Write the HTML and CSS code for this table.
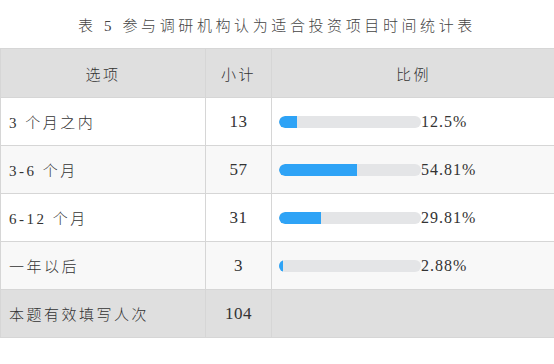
FILE: index.html
```html
<!DOCTYPE html>
<html lang="zh-CN">
<head>
<meta charset="utf-8">
<title>表5</title>
<link rel="stylesheet" href="styles.css">
</head>
<body>
<div class="page">
  <div class="title">表 5 参与调研机构认为适合投资项目时间统计表</div>
  <table class="stats">
    <colgroup>
      <col class="c-opt"><col class="c-cnt"><col class="c-pct">
    </colgroup>
    <thead>
      <tr class="head"><th>选项</th><th>小计</th><th>比例</th></tr>
    </thead>
    <tbody>
      <tr class="odd"><td class="opt">3 个月之内</td><td class="cnt">13</td><td class="pct"><div class="pctwrap"><div class="track"><div class="fill" style="width:12.5%"></div></div><span class="num">12.5%</span></div></td></tr>
      <tr class="even"><td class="opt">3-6 个月</td><td class="cnt">57</td><td class="pct"><div class="pctwrap"><div class="track"><div class="fill" style="width:54.81%"></div></div><span class="num">54.81%</span></div></td></tr>
      <tr class="odd"><td class="opt">6-12 个月</td><td class="cnt">31</td><td class="pct"><div class="pctwrap"><div class="track"><div class="fill" style="width:29.81%"></div></div><span class="num">29.81%</span></div></td></tr>
      <tr class="even"><td class="opt">一年以后</td><td class="cnt">3</td><td class="pct"><div class="pctwrap"><div class="track"><div class="fill" style="width:2.88%"></div></div><span class="num">2.88%</span></div></td></tr>
    </tbody>
    <tfoot>
      <tr class="foot"><td class="opt">本题有效填写人次</td><td class="cnt">104</td><td class="pct"></td></tr>
    </tfoot>
  </table>
</div>
</body>
</html>
```
FILE: styles.css
```css
html, body {
  margin: 0;
  padding: 0;
  background: #ffffff;
}
body {
  font-family: "Liberation Serif", "Noto Sans CJK SC", serif;
  color: #333333;
}
.page {
  width: 554px;
  overflow: hidden;
}
.title {
  height: 48px;
  box-sizing: border-box;
  padding-top: 4px;
  line-height: 44px;
  text-align: center;
  font-size: 15px;
  font-weight: 300;
  letter-spacing: 3.6px;
  color: #444444;
}
.stats {
  width: 555px;
  border-collapse: collapse;
  table-layout: fixed;
  font-size: 15px;
  font-weight: 300;
  letter-spacing: 2.5px;
}
.c-opt { width: 205px; }
.c-cnt { width: 66px; }
.c-pct { width: 284px; }
.stats th,
.stats td {
  border: 1px solid #d6d6d6;
  padding: 0;
  height: 47px;
  font-weight: 300;
}
.head th {
  background: #dfdfdf;
  text-align: center;
  height: 48px;
}
.odd td { background: #ffffff; }
.even td { background: #f8f8f8; }
.foot td { background: #dfdfdf; }
.opt {
  padding-left: 8px !important;
  text-align: left;
}
.cnt {
  text-align: center;
  font-size: 17px;
  letter-spacing: 0.5px;
}
.pct {
  padding-left: 7px !important;
}
.pctwrap {
  display: flex;
  align-items: center;
}
.track {
  width: 142px;
  height: 12px;
  border-radius: 6px;
  background: #e4e5e7;
  overflow: hidden;
  flex: none;
}
.fill {
  height: 100%;
  background: #2ea3f6;
  border-radius: 6px 0 0 6px;
}
.num {
  font-size: 16px;
  letter-spacing: 1px;
}
```
